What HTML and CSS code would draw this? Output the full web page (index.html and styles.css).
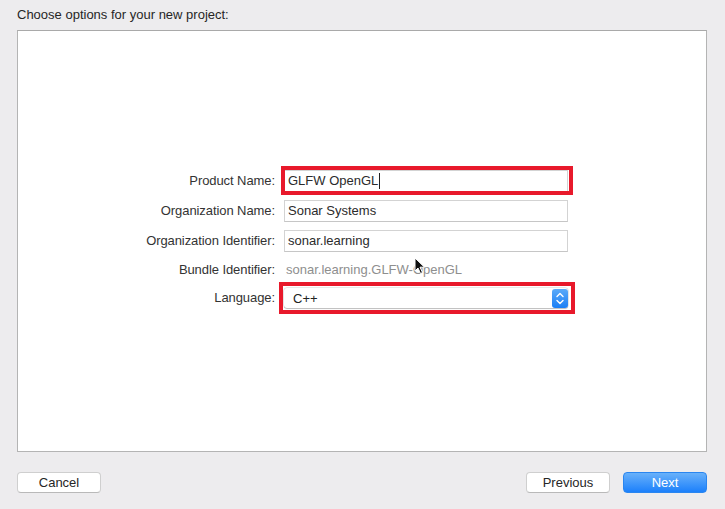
FILE: index.html
```html
<!DOCTYPE html>
<html>
<head>
<meta charset="utf-8">
<link rel="stylesheet" href="styles.css">
</head>
<body>
<div class="window">
  <div class="title">Choose options for your new project:</div>
  <div class="panel">
    <div class="form">
      <div class="label r-product">Product Name:</div>
      <div class="field hl hl-product r-product"><span>GLFW OpenGL</span><span class="caret"></span></div>

      <div class="label r-org">Organization Name:</div>
      <div class="field r-org"><span>Sonar Systems</span></div>

      <div class="label r-ident">Organization Identifier:</div>
      <div class="field r-ident"><span>sonar.learning</span></div>

      <div class="label r-bundle">Bundle Identifier:</div>
      <div class="static r-bundle">sonar.learning.GLFW-OpenGL</div>

      <div class="label r-lang">Language:</div>
      <div class="popup hl hl-lang r-lang">
        <span class="popup-text">C++</span>
        <span class="stepper">
          <svg width="16" height="19" viewBox="0 0 16 19">
            <path d="M5 7.5 L8 4.5 L11 7.5" fill="none" stroke="#fff" stroke-width="1.4" stroke-linecap="round" stroke-linejoin="round"/>
            <path d="M5 11.5 L8 14.5 L11 11.5" fill="none" stroke="#fff" stroke-width="1.4" stroke-linecap="round" stroke-linejoin="round"/>
          </svg>
        </span>
      </div>
    </div>
    <svg class="cursor" width="12" height="18" viewBox="0 0 12 18">
      <path d="M1 1 L1 14 L4 11 L6.5 16.5 L8.5 15.5 L6 10.2 L10.5 10.2 Z" fill="#111" stroke="#fff" stroke-width="1"/>
    </svg>
  </div>
  <div class="footer">
    <button class="btn">Cancel</button>
    <div class="right">
      <button class="btn">Previous</button>
      <button class="btn primary">Next</button>
    </div>
  </div>
</div>
</body>
</html>
```
FILE: styles.css
```css
html, body {
  margin: 0;
  padding: 0;
  background: #edecee;
}
body {
  width: 725px;
  height: 509px;
  overflow: hidden;
  font-family: "Liberation Sans", Arial, sans-serif;
  font-size: 13px;
  color: #2a2a2a;
}
.window {
  padding: 0 18px 0 17px;
  display: flex;
  flex-direction: column;
}
.title {
  height: 30px;
  box-sizing: border-box;
  padding-top: 7px;
  line-height: 16px;
  color: #262626;
}
.panel {
  position: relative;
  height: 422px;
  box-sizing: border-box;
  background: #fff;
  border: 1px solid #b4b4b4;
  border-top-color: #a9a9a9;
  display: flex;
  flex-direction: column;
  justify-content: flex-start;
}
.form {
  margin-top: 139px;
  display: grid;
  grid-template-columns: 257px 284px;
  grid-template-rows: 22px 8px 22px 8px 22px 8px 20px 8px 20px;
  column-gap: 9px;
}
.label {
  text-align: right;
  align-self: center;
  color: #333;
  line-height: 16px;
  letter-spacing: -0.08px;
}
.r-product { grid-row: 1; }
.r-org { grid-row: 3; }
.r-ident { grid-row: 5; }
.r-bundle { grid-row: 7; }
.r-lang { grid-row: 9; }
.field {
  box-sizing: border-box;
  height: 22px;
  border: 1px solid #d3d3d3;
  border-bottom-color: #c6c6c6;
  background: #fff;
  padding-left: 3px;
  display: flex;
  align-items: center;
  color: #2b2b2b;
  line-height: 16px;
}
.caret {
  display: inline-block;
  width: 1px;
  height: 16px;
  background: #222;
  margin-left: 1px;
}
.static {
  color: #8e8e8e;
  align-self: center;
  padding-left: 2px;
  line-height: 16px;
}
.popup {
  box-sizing: border-box;
  height: 20px;
  border-radius: 3px;
  background: #fff;
  box-shadow: 0 0 0 0.5px rgba(0,0,0,0.18), 0 1px 1px rgba(0,0,0,0.18);
  display: flex;
  align-items: center;
  justify-content: space-between;
  padding: 0 0 0 9px;
  color: #222;
}
.stepper {
  width: 16px;
  height: 19px;
  border-radius: 3px;
  background: linear-gradient(#5aaaf9, #1c7ff5);
  display: flex;
}
.hl { position: relative; }
.hl::after {
  content: "";
  position: absolute;
  border: 4px solid #e8192b;
  pointer-events: none;
}
.hl-product::after { top: -5px; bottom: -4px; left: -4px; right: -6px; }
.hl-lang::after { top: -6px; bottom: -6px; left: -5px; right: -7px; }
.cursor {
  position: absolute;
  left: 396px;
  top: 226px;
}
.footer {
  margin-top: 20px;
  display: flex;
  justify-content: space-between;
  align-items: center;
}
.right {
  display: flex;
  gap: 13px;
}
.btn {
  box-sizing: border-box;
  width: 84px;
  height: 21px;
  padding: 0;
  font-family: "Liberation Sans", Arial, sans-serif;
  font-size: 13px;
  color: #262626;
  background: #fff;
  border: 1px solid #cfcfcf;
  border-bottom-color: #b9b9b9;
  border-radius: 4px;
}
.btn.primary {
  color: #fff;
  background: linear-gradient(#69b1fa, #1c80fb);
  border: 1px solid #2a86f0;
}
```
